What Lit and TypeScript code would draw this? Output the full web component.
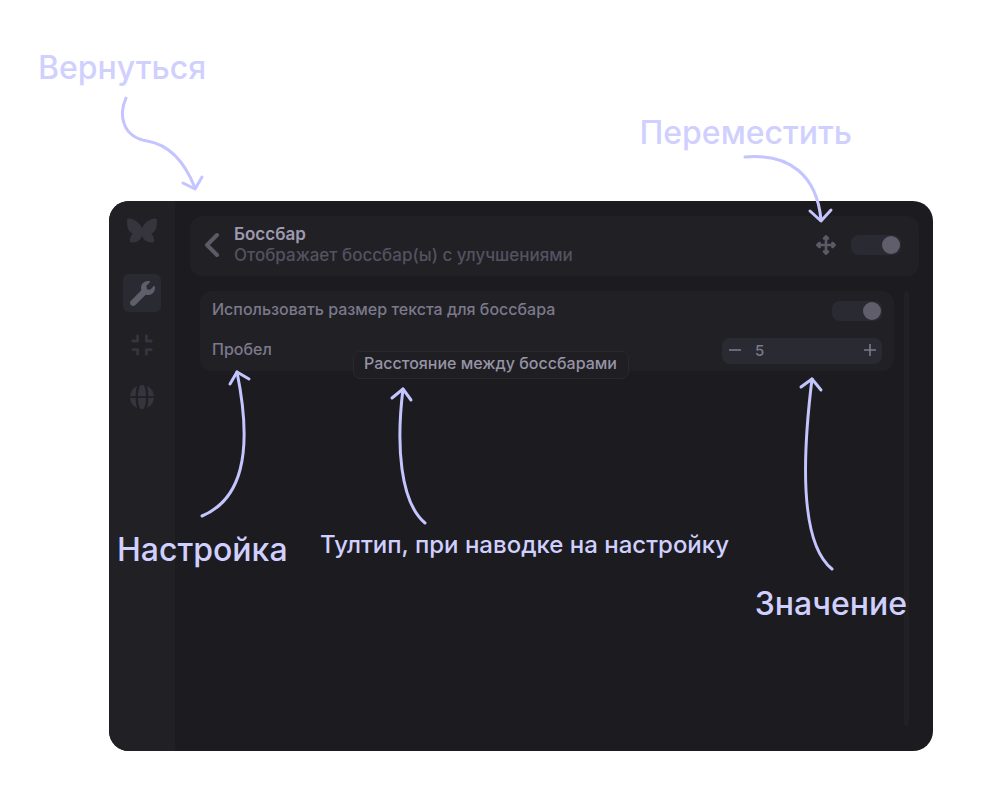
import { LitElement, html, svg, css } from "lit";
import { customElement, property, state } from "lit/decorators.js";

interface Note {
  name: string;
  text: string;
  width: number;
  height: number;
  curve: string;
  head: string;
}

const NOTES: Note[] = [
  { name: "back", text: "Вернуться", width: 100, height: 110, curve: "M16 8C8 26 13 47 37 51C61 55 76 75 85 98", head: "M73 93L85 99L92 87" },
  { name: "move", text: "Переместить", width: 100, height: 80, curve: "M5 7C50 3 77 26 81 70", head: "M70 61L81 71L91 60" },
  { name: "setting", text: "Настройка", width: 70, height: 160, curve: "M12 156C50 140 64 96 47 12", head: "M40 24L47 12L59 19" },
  { name: "hint", text: "Тултип, при наводке на настройку", width: 50, height: 150, curve: "M45 143C20 122 16 65 23 9", head: "M12 18L23 9L31 20" },
  { name: "value", text: "Значение", width: 50, height: 210, curve: "M42 199C12 175 11 98 22 9", head: "M11 17L22 9L31 20" },
];

@customElement("toggle-switch")
export class ToggleSwitch extends LitElement {
  @property() label = "";

  static styles = css`
    :host {
      display: flex;
    }
    .toggle {
      appearance: none;
      box-sizing: border-box;
      display: flex;
      align-items: center;
      width: 50px;
      height: 20px;
      margin: 0;
      padding: 0 1px;
      border-radius: 8px;
      background: #2a2a32;
      cursor: pointer;
    }
    .toggle::before {
      content: "";
      width: 18px;
      height: 18px;
      border-radius: 50%;
      background: #605e6b;
    }
    .toggle:checked {
      justify-content: flex-end;
    }
  `;

  render() {
    return html`<input class="toggle" type="checkbox" aria-label=${this.label} checked />`;
  }
}

@customElement("app-root")
export class AppRoot extends LitElement {
  @state() private gap = 5;

  static styles = css`
    :host {
      display: block;
      position: relative;
      box-sizing: border-box;
      min-height: 100vh;
      padding: 201px 67px 49px 109px;
      background: #fff;
      font-family: Inter, "Noto Sans", sans-serif;
      font-size: 16px;
      font-weight: 500;
      line-height: 21px;
      color: #7b798b;
    }
    button {
      display: flex;
      align-items: center;
      justify-content: center;
      margin: 0;
      padding: 0;
      border: 0;
      background: none;
      color: inherit;
      cursor: pointer;
    }
    svg {
      display: block;
    }
    .window {
      display: flex;
      min-height: 550px;
      border-radius: 20px;
      background: #1c1b1f;
      overflow: hidden;
    }
    .sidebar {
      display: flex;
      flex-direction: column;
      align-items: center;
      gap: 30px;
      width: 66px;
      padding-top: 17px;
      box-sizing: border-box;
      background: #212025;
      color: #36353e;
    }
    .nav {
      display: flex;
      flex-direction: column;
      gap: 14px;
    }
    .nav-item {
      width: 38px;
      height: 38px;
      border-radius: 6px;
    }
    .nav-item.active {
      background: #2a2a32;
      color: #605e6b;
    }
    .main {
      flex: 1;
      display: flex;
      flex-direction: column;
      gap: 15px;
      padding: 15px 14px 25px 15px;
    }
    .header {
      display: flex;
      align-items: center;
      gap: 14px;
      height: 60px;
      padding: 0 18px 2px 14px;
      box-sizing: border-box;
      border-radius: 12px;
      background: #212025;
    }
    .back,
    .drag {
      color: #5c5a67;
    }
    .heading {
      flex: 1;
    }
    .title,
    .description {
      margin: 0;
      font-size: 17px;
      line-height: 21px;
    }
    .title {
      font-weight: 600;
      color: #9d9aaf;
    }
    .description {
      color: #545260;
    }
    .content {
      flex: 1;
      display: flex;
      align-items: flex-start;
      gap: 10px;
      padding: 0 10px;
    }
    .card {
      flex: 1;
      border-radius: 12px;
      background: #212025;
    }
    .row {
      display: flex;
      align-items: center;
      justify-content: space-between;
      height: 40px;
      padding: 0 12px;
    }
    .label {
      padding-bottom: 4px;
    }
    .scrollbar {
      align-self: stretch;
      width: 5px;
      border-radius: 3px;
      background: #212025;
    }
    .stepper {
      display: flex;
      align-items: center;
      box-sizing: border-box;
      width: 160px;
      height: 26px;
      padding-bottom: 2px;
      border-radius: 8px;
      background: #2a2a32;
    }
    .step {
      width: 25px;
      height: 24px;
    }
    .number {
      flex: 1;
      min-width: 0;
      margin: 0;
      padding: 0 8px;
      border: 0;
      outline: 0;
      background: none;
      color: inherit;
      font: inherit;
      font-size: 15px;
    }
    .tooltip {
      position: absolute;
      left: 353px;
      top: 351px;
      padding: 1px 11px 4px 10px;
      border: 1px solid #29282e;
      border-radius: 7px;
      background: #1f1e22;
      color: #9694a6;
    }
    .note {
      position: absolute;
      font-size: 32px;
      line-height: 40px;
      color: #d0d0ff;
      white-space: nowrap;
    }
    .arrow {
      position: absolute;
      fill: none;
      stroke: #c4c4ff;
      stroke-width: 3;
      stroke-linecap: round;
      stroke-linejoin: round;
      pointer-events: none;
    }
    .note-back { left: 38px; top: 48px; }
    .note-move { right: 148px; top: 113px; }
    .note-setting { left: 117px; top: 530px; }
    .note-hint { left: 320px; top: 525px; font-size: 24px; }
    .note-value { right: 93px; top: 584px; }
    .arrow-back { left: 110px; top: 90px; }
    .arrow-move { right: 160px; top: 150px; }
    .arrow-setting { left: 190px; top: 360px; }
    .arrow-hint { left: 380px; top: 380px; }
    .arrow-value { right: 160px; top: 370px; }
  `;

  private wing() {
    return svg`<path d="M15 10C12.4 4.6 7 .8 2 .6C.4 .6 0 1.4 0 3C0 9.5 1.6 14.4 5.8 15.6C3.6 17.8 2.6 20.8 3 23.2C3.2 24.7 4.6 24.7 6 24.4C11 24 14 21.4 15 17.5Z" />`;
  }

  private setGap(event: Event) {
    this.gap = Number((event.target as HTMLInputElement).value) || 0;
  }

  render() {
    return html`
      <div class="window">
        <aside class="sidebar">
          <svg width="30" height="26" viewBox="0 0 30 26" fill="currentColor" aria-hidden="true">
            ${this.wing()}
            <g transform="matrix(-1 0 0 1 30 0)">${this.wing()}</g>
          </svg>
          <nav class="nav">
            <button class="nav-item active" aria-label="Настройки">
              <svg width="25" height="25" viewBox="0 0 512 512" fill="currentColor">
                <path d="M507.73 109.1c-2.24-9.03-13.54-12.09-20.12-5.51l-74.36 74.36-67.88-11.31-11.31-67.88 74.36-74.36c6.62-6.62 3.43-17.9-5.66-20.16-47.38-11.74-99.55.91-136.58 37.93-39.64 39.64-50.55 97.1-34.05 147.2L18.74 402.76c-24.99 24.99-24.99 65.51 0 90.5 24.99 24.99 65.51 24.99 90.5 0l213.21-213.21c50.12 16.71 107.47 5.68 147.37-34.22 37.07-37.07 49.7-89.32 37.91-136.73z" />
              </svg>
            </button>
            <button class="nav-item" aria-label="Свернуть">
              <svg width="22" height="22" viewBox="0 0 22 22" fill="none" stroke="currentColor" stroke-width="2.8" stroke-linecap="round" stroke-linejoin="round">
                <path d="M1.8 7H6.6V2M20.2 7H15.4V2M1.8 15.6H6.6V20.2M20.2 15.6H15.4V20.2" />
              </svg>
            </button>
            <button class="nav-item" aria-label="Язык">
              <svg width="24" height="24" viewBox="0 0 24 24">
                <circle cx="12" cy="12" r="12" fill="currentColor" />
                <g fill="none" stroke="#212025" stroke-width="1.8">
                  <path d="M9.6 -1C6 6 6 18 9.6 25M14.4 -1C18 6 18 18 14.4 25" />
                  <path d="M8.6 -1C5.6 5 5.6 19 8.6 25M15.4 -1C18.4 5 18.4 19 15.4 25" stroke-width="1.4" />
                  <path d="M0 12H24" />
                </g>
              </svg>
            </button>
          </nav>
        </aside>
        <main class="main">
          <header class="header">
            <button class="back" aria-label="Назад">
              <svg width="16" height="26" viewBox="0 0 16 26" fill="none" stroke="currentColor" stroke-width="4" stroke-linecap="round" stroke-linejoin="round">
                <path d="M13 3L3 13L13 23" />
              </svg>
            </button>
            <div class="heading">
              <h1 class="title">Боссбар</h1>
              <p class="description">Отображает боссбар(ы) с улучшениями</p>
            </div>
            <button class="drag" aria-label="Переместить">
              <svg width="22" height="22" viewBox="0 0 22 22" fill="currentColor" stroke="currentColor" stroke-linejoin="round">
                <path d="M11 3V19M3 11H19" stroke-width="2.6" />
                <path d="M11 2L13.2 4.2V4.8H8.8V4.2ZM11 20L13.2 17.8V17.2H8.8V17.8ZM2 11L4.2 8.8H4.8V13.2H4.2ZM20 11L17.8 8.8H17.2V13.2H17.8Z" stroke-width="2" />
              </svg>
            </button>
            <toggle-switch label="Боссбар"></toggle-switch>
          </header>
          <section class="content">
            <div class="card">
              <div class="row">
                <span class="label">Использовать размер текста для боссбара</span>
                <toggle-switch label="Использовать размер текста для боссбара"></toggle-switch>
              </div>
              <div class="row">
                <label class="label" for="gap">Пробел</label>
                <div class="stepper">
                  <button class="step" aria-label="Меньше" @click=${() => this.gap--}>
                    <svg width="12" height="12" viewBox="0 0 12 12" stroke="currentColor" stroke-width="1.6"><path d="M0 6H12" /></svg>
                  </button>
                  <input class="number" id="gap" inputmode="numeric" .value=${String(this.gap)} @change=${this.setGap} />
                  <button class="step" aria-label="Больше" @click=${() => this.gap++}>
                    <svg width="12" height="12" viewBox="0 0 12 12" stroke="currentColor" stroke-width="1.6"><path d="M0 6H12M6 0V12" /></svg>
                  </button>
                </div>
              </div>
            </div>
            <div class="scrollbar"></div>
          </section>
        </main>
      </div>
      <div class="tooltip" role="tooltip">Расстояние между боссбарами</div>
      ${NOTES.map(
        (note) => html`
          <span class="note note-${note.name}">${note.text}</span>
          <svg class="arrow arrow-${note.name}" width=${note.width} height=${note.height} aria-hidden="true">
            <path d=${note.curve} />
            <path d=${note.head} />
          </svg>
        `
      )}
    `;
  }
}
